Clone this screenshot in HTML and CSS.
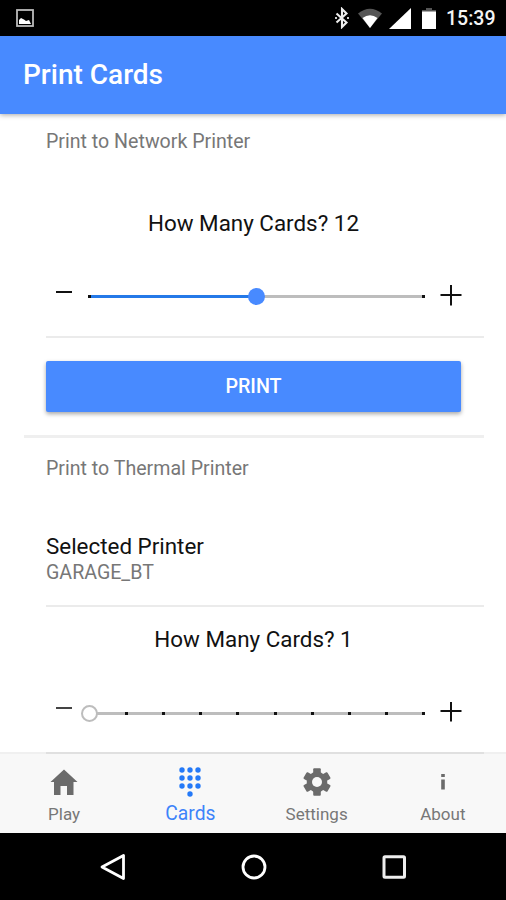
FILE: index.html
```html
<!DOCTYPE html>
<html lang="en">
<head>
  <meta charset="UTF-8">
  <title>Print Cards</title>
  <link rel="stylesheet" href="styles.css">
</head>
<body>

  <div class="statusbar">
    <svg class="picture" width="18" height="18" viewBox="0 0 18 18">
      <rect x="1" y="1" width="16" height="16" fill="none" stroke="#bbb" stroke-width="1.8"/>
      <path d="M3 15v-4l2-2 3 1.500 2 1.500 3-1 2 4z" fill="#fff"/>
    </svg>
    <svg class="bluetooth" width="14" height="22" viewBox="0 0 14 22">
      <path d="M1.500 6.500l10 9-4.500 4.500V2l4.500 4.500-10 9" fill="none" stroke="#eee" stroke-width="2.100"/>
      <path d="M0 11h2M12 11h2" stroke="#ccc" stroke-width="2"/>
    </svg>
    <svg class="wifi" width="26" height="20" viewBox="0 0 26 20">
      <path d="M1 5.500Q13-4 25 5.500L13 20z" fill="#555"/>
      <path d="M5.500 10Q13 4.500 20.500 10L13 20z" fill="#fff"/>
    </svg>
    <svg class="signal" width="22" height="21" viewBox="0 0 22 21">
      <path d="M0 21L22 0v21z" fill="#fff"/>
    </svg>
    <svg class="battery" width="14" height="21" viewBox="0 0 14 21">
      <path d="M4 0h6v2h4v3H0V2h4z" fill="#555"/>
      <path d="M0 3.500h14V21H0z" fill="#fff"/>
    </svg>
    <span class="time">15:39</span>
  </div>

  <header class="header">
    <h1>Print Cards</h1>
  </header>

  <main class="content">
    <section class="network">
      <h2>Print to Network Printer</h2>
      <div class="amount">How Many Cards? 12</div>
      <div class="range">
        <svg class="minus" width="16" height="20" viewBox="0 0 16 20"><path d="M0 6h16" stroke="#111" stroke-width="2"/></svg>
        <div class="track">
          <div class="fill" style="width: 50%"></div>
          <i></i><i></i>
          <div class="knob" style="left: 50%"></div>
        </div>
        <svg class="plus" width="22" height="22" viewBox="0 0 22 22"><path d="M.5 10h21M11 0v20.500" stroke="#111" stroke-width="2"/></svg>
      </div>
      <button type="button">PRINT</button>
    </section>

    <section class="thermal">
      <h2>Print to Thermal Printer</h2>
      <div class="printer">
        <div class="name">Selected Printer</div>
        <p>GARAGE_BT</p>
      </div>
      <div class="amount">How Many Cards? 1</div>
      <div class="range">
        <svg class="minus" width="16" height="20" viewBox="0 0 16 20"><path d="M0 5h16" stroke="#444" stroke-width="2"/></svg>
        <div class="track">
          <i></i><i></i><i></i><i></i><i></i><i></i><i></i><i></i><i></i><i></i>
          <div class="knob empty" style="left: 0%"></div>
        </div>
        <svg class="plus" width="22" height="22" viewBox="0 0 22 22"><path d="M.5 9h21M11 0v19.500" stroke="#111" stroke-width="2"/></svg>
      </div>
    </section>
  </main>

  <nav class="tabs">
    <a class="tab">
      <svg width="30" height="30" viewBox="0 0 30 30">
        <path d="M15 2.500L1.500 15H5v13h6.500v-9h6.500v9h6.500V15h4z" fill="#6b6b6b"/>
      </svg>
      <span>Play</span>
    </a>
    <a class="tab active">
      <svg width="30" height="30" viewBox="0 0 30 30" fill="#2479f8">
        <circle cx="7" cy="3" r="2.700"/><circle cx="15" cy="3" r="2.700"/><circle cx="23" cy="3" r="2.700"/>
        <circle cx="7" cy="11" r="2.700"/><circle cx="15" cy="11" r="2.700"/><circle cx="23" cy="11" r="2.700"/>
        <circle cx="7" cy="19" r="2.700"/><circle cx="15" cy="19" r="2.700"/><circle cx="23" cy="19" r="2.700"/>
        <circle cx="15" cy="27" r="2.700"/>
      </svg>
      <span>Cards</span>
    </a>
    <a class="tab">
      <svg width="30" height="30" viewBox="0 0 30 30">
        <g fill="#6b6b6b">
          <rect x="11.200" y="1.200" width="7.600" height="27.600" rx="1"/>
          <rect x="11.200" y="1.200" width="7.600" height="27.600" rx="1" transform="rotate(60 15 15)"/>
          <rect x="11.200" y="1.200" width="7.600" height="27.600" rx="1" transform="rotate(120 15 15)"/>
          <circle cx="15" cy="15" r="10.300"/>
        </g>
        <circle cx="15" cy="15" r="5" fill="#f8f8f8"/>
      </svg>
      <span>Settings</span>
    </a>
    <a class="tab">
      <svg width="30" height="30" viewBox="0 0 30 30">
        <path d="M13.200 7h3.600v3h-3.600zM13.200 12.500h3.600v10h-3.600z" fill="#6b6b6b"/>
      </svg>
      <span>About</span>
    </a>
  </nav>

  <div class="navbar">
    <svg width="28" height="28" viewBox="0 0 28 28"><path d="M24.500 2.500v23L3 14z" fill="none" stroke="#fff" stroke-width="2.800" stroke-linejoin="round"/></svg>
    <svg width="28" height="28" viewBox="0 0 28 28"><circle cx="14" cy="14" r="11" fill="none" stroke="#fff" stroke-width="2.800"/></svg>
    <svg width="28" height="28" viewBox="0 0 28 28"><rect x="3" y="3.700" width="20.500" height="20.500" rx="1" fill="none" stroke="#eee" stroke-width="3"/></svg>
  </div>

</body>
</html>
```
FILE: styles.css
```css
* {
  box-sizing: border-box;
}
body {
  margin: 0;
  height: 900px;
  display: flex;
  flex-direction: column;
  overflow: hidden;
  background: #fff;
  font-family: Roboto, sans-serif;
  color: #111;
}
h1, h2, p {
  margin: 0;
  font-weight: 400;
}
svg {
  display: block;
  flex: none;
}
.statusbar {
  height: 36px;
  flex: none;
  display: flex;
  align-items: center;
  padding: 0 11px 0 16px;
  background: #000;
}
.picture {
  margin-right: auto;
}
.wifi {
  margin-left: 8px;
}
.signal {
  margin-left: 6px;
}
.battery {
  margin-left: 11px;
}
.time {
  width: 49px;
  margin-left: 10px;
  padding-top: 2px;
  color: #f4f4f4;
  font-size: 19.5px;
  font-weight: 500;
  line-height: 34px;
  white-space: nowrap;
}
.header {
  height: 78px;
  flex: none;
  padding-left: 23px;
  background: #488aff;
  box-shadow: 0 1px 5px rgba(0,0,0,0.35);
}
.header h1 {
  color: #fff;
  font-size: 28px;
  font-weight: 500;
  line-height: 78px;
}
/* last divider runs over the top edge of the tabs */
.content {
  height: 638px;
  flex: none;
  z-index: 1;
}
.network, .thermal {
  margin: 0 22px 0 24px;
  padding-left: 22px;
}
.network {
  height: 324px;
  border-bottom: 3px solid #efefef;
}
h2 {
  color: #777;
  font-size: 19.6px;
  line-height: 56px;
}
.amount {
  padding-right: 23px;
  text-align: center;
  font-size: 22.4px;
  line-height: 30px;
}
.network .amount {
  margin-top: 38px;
}
.range {
  display: flex;
  align-items: center;
  border-bottom: 2px solid #ebebeb;
}
.network .range {
  height: 100px;
  padding: 18px 22px 0 10px;
}
.track {
  position: relative;
  flex: 1;
  height: 3px;
  display: flex;
  justify-content: space-between;
  margin: 0 15px 0 16px;
  background: #bdbdbd;
}
.track i {
  width: 3px;
  height: 3px;
  background: #111;
  z-index: 1;
}
.fill {
  position: absolute;
  height: 3px;
  background: #2479e8;
}
.knob {
  position: absolute;
  top: -7px;
  width: 17px;
  height: 17px;
  margin-left: -9px;
  border-radius: 50%;
  background: #488aff;
  z-index: 2;
}
.knob.empty {
  margin-left: -7px;
  border: 2px solid #bdbdbd;
  background: #fff;
}
button {
  display: block;
  width: 415px;
  height: 51px;
  margin-top: 23px;
  padding: 0 0 1px;
  border: 0;
  border-radius: 2px;
  background: #488aff;
  box-shadow: 0 2px 4px rgba(0,0,0,0.35);
  color: #fff;
  font: 500 19.7px Roboto, sans-serif;
}
.thermal h2 {
  line-height: 62px;
}
.printer {
  height: 107px;
  padding-top: 32px;
  border-bottom: 2px solid #ebebeb;
}
.printer .name {
  font-size: 22.4px;
  line-height: 28px;
}
.printer p {
  color: #777;
  font-size: 19.6px;
  line-height: 26px;
}
.thermal .amount {
  margin-top: 17px;
}
.thermal .range {
  height: 100px;
  padding: 20px 22px 0 10px;
  border-bottom: 2px solid #e0e0e0;
}
.tabs {
  height: 81px;
  flex: none;
  display: flex;
  padding-left: 1px;
  border-top: 2px solid #f0f0f0;
  background: #f8f8f8;
}
.tab {
  flex: 1;
  display: flex;
  flex-direction: column;
  align-items: center;
  color: #777;
  font-size: 17px;
}
.tab svg {
  height: 32px;
  margin-top: 12px;
}
.tab span {
  line-height: 32px;
}
.tab.active {
  color: #3d83fa;
  font-size: 19.3px;
}
.navbar {
  height: 67px;
  flex: none;
  display: flex;
  justify-content: center;
  align-items: center;
  gap: 113px;
  padding-left: 1px;
  background: #000;
}
```
